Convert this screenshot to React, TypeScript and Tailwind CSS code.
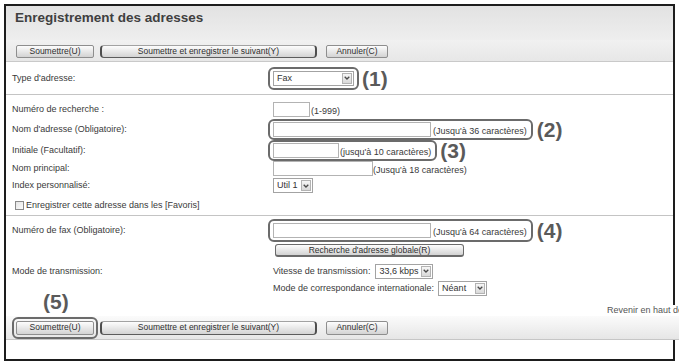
import type { ReactNode } from "react";

function Btn({ cls, strong, children }: { cls: string; strong?: boolean; children: ReactNode }) {
  return (
    <button
      type="button"
      className={`flex shrink-0 items-center justify-center bg-linear-to-b from-[#fdfdfd] to-[#d3d3d3] text-[8.5px] leading-none text-[#2e2e2e] ${
        strong
          ? "rounded-[4px] border-x-2 border-y border-x-[#4e4e4e] border-t-[#a2a2a2] border-b-[#5c5c5c]"
          : "rounded-[2px] border border-[#8e8e8e]"
      } ${cls}`}
    >
      {children}
    </button>
  );
}

function Input({ w }: { w: string }) {
  return <div className={`h-[15px] shrink-0 border border-[#b3b3b3] bg-white ${w}`} />;
}

function Sel({ w, value }: { w: string; value: string }) {
  return (
    <div
      className={`flex h-[15px] shrink-0 items-center justify-between border border-[#a3a3a3] bg-white pr-[1px] pl-[3px] ${w}`}
    >
      <span className="text-[9px] leading-none text-[#333]">{value}</span>
      <span className="flex h-[11px] w-[10px] items-center justify-center border border-[#b3b3b3] bg-linear-to-b from-[#f6f6f6] to-[#d9d9d9]">
        <svg width="6" height="4" viewBox="0 0 6 4">
          <path d="M0.7 0.7 L3 3 L5.3 0.7" fill="none" stroke="#4a4a4a" strokeWidth="1.3" />
        </svg>
      </span>
    </div>
  );
}

function Callout({ cls, children }: { cls: string; children: ReactNode }) {
  return (
    <div className={`flex shrink-0 items-end rounded-[6px] border-2 border-[#6b6b6b] ${cls}`}>
      {children}
    </div>
  );
}

function Num({ cls, children }: { cls?: string; children: ReactNode }) {
  return (
    <span className={`text-[21px] font-bold leading-none text-[#5a5a5a] ${cls ?? ""}`}>{children}</span>
  );
}

function Row({ h, label, children }: { h: string; label?: string; children: ReactNode }) {
  return (
    <div className={`flex shrink-0 items-center ${h}`}>
      <div className="w-[262px] shrink-0 pl-[6px] leading-[11px]">{label}</div>
      <div className="flex items-center">{children}</div>
    </div>
  );
}

export default function App() {
  return (
    <div className="h-[364px] w-[679px] overflow-hidden bg-white pt-[4px] pl-[4px] font-['Liberation_Sans',Arial,sans-serif] text-[9px] text-[#3a3a3a]">
      <div className="flex h-[357px] w-[671px] flex-col border-2 border-[#1d1d1d]">
        {/* titre */}
        <div className="h-[34px] shrink-0 bg-linear-to-b from-[#e2e2e2] to-[#eeeeee] pt-[4px] pl-[9px] text-[13.5px] leading-[16px] font-bold text-[#3f3f3f]">
          Enregistrement des adresses
        </div>
        <div className="flex h-[22px] shrink-0 items-start border-b border-[#c9c9c9] bg-linear-to-b from-[#f1f1f1] to-[#e7e7e7] pt-[5px] pl-[10px]">
          <Btn cls="h-[13px] w-[78px]">Soumettre(U)</Btn>
          <Btn cls="ml-[6px] h-[13px] w-[217px]" strong>
            Soumettre et enregistrer le suivant(Y)
          </Btn>
          <Btn cls="ml-[9px] h-[13px] w-[62px]">Annuler(C)</Btn>
        </div>

        {/* type */}
        <div className="flex h-[33px] shrink-0 items-center border-b border-[#c4c4c4]">
          <div className="w-[262px] shrink-0 pl-[6px] leading-[11px]">Type d'adresse:</div>
          <Callout cls="px-[3px] py-[2px]">
            <Sel w="w-[81px]" value="Fax" />
          </Callout>
          <Num cls="ml-[3px]">(1)</Num>
        </div>

        {/* adresse */}
        <div className="flex h-[121px] shrink-0 flex-col border-b border-[#c4c4c4] pt-[4px]">
          <Row h="h-[20px]" label="Numéro de recherche :">
            <div className="flex items-end pl-[5px]">
              <Input w="w-[37px]" />
              <span className="ml-[1px] leading-[11px]">(1-999)</span>
            </div>
          </Row>
          <Row h="h-[21px]" label="Nom d'adresse (Obligatoire):">
            <Callout cls="px-[3px] py-[1px]">
              <Input w="w-[158px]" />
              <span className="mr-[1px] ml-[2px] leading-[11px]">(Jusqu'à 36 caractères)</span>
            </Callout>
            <Num cls="ml-[4px]">(2)</Num>
          </Row>
          <Row h="h-[21px]" label="Initiale (Facultatif):">
            <Callout cls="px-[3px] py-[1px]">
              <Input w="w-[66px]" />
              <span className="mr-[1px] ml-[1px] leading-[11px]">(jusqu'à 10 caractères)</span>
            </Callout>
            <Num cls="ml-[3px]">(3)</Num>
          </Row>
          <Row h="h-[15px]" label="Nom principal:">
            <div className="flex items-end pl-[5px]">
              <Input w="w-[100px]" />
              <span className="leading-[11px]">(Jusqu'à 18 caractères)</span>
            </div>
          </Row>
          <Row h="h-[19px]" label="Index personnalisé:">
            <div className="pl-[5px]">
              <Sel w="w-[40px]" value="Util 1" />
            </div>
          </Row>
          <div className="flex h-[20px] shrink-0 items-center pl-[9px]">
            <span className="h-[9px] w-[9px] border border-[#8a8a8a] bg-linear-to-br from-[#e4e4e4] to-[#fbfbfb]" />
            <span className="ml-[2px] leading-[11px]">Enregistrer cette adresse dans les [Favoris]</span>
          </div>
        </div>

        {/* fax */}
        <div className="flex h-[100px] shrink-0 flex-col">
          <div className="mt-[3px] flex h-[23px] shrink-0 items-center">
            <div className="w-[262px] shrink-0 pl-[6px] leading-[11px]">Numéro de fax (Obligatoire):</div>
            <Callout cls="px-[3px] py-[2px]">
              <Input w="w-[158px]" />
              <span className="mr-[1px] ml-[2px] leading-[11px]">(Jusqu'à 64 caractères)</span>
            </Callout>
            <Num cls="ml-[4px]">(4)</Num>
          </div>
          <div className="mt-[2px] flex h-[13px] shrink-0 pl-[269px]">
            <Btn cls="h-[13px] w-[189px] !rounded-[3px] !border-[#6a6a6a] !border-b-2">
              Recherche d'adresse globale(R)
            </Btn>
          </div>
          <Row h="mt-[5px] h-[18px]" label="Mode de transmission:">
            <div className="flex items-center gap-[5px] pl-[5px]">
              <span className="leading-[11px]">Vitesse de transmission:</span>
              <Sel w="w-[58px]" value="33,6 kbps" />
            </div>
          </Row>
          <Row h="h-[16px]">
            <div className="flex items-center gap-[4px] pl-[5px]">
              <span className="leading-[11px]">Mode de correspondance internationale:</span>
              <Sel w="w-[49px]" value="Néant" />
            </div>
          </Row>
          <div className="flex h-[20px] shrink-0 items-start">
            <div className="w-[601px] shrink-0 pl-[37px]">
              <Num cls="-mt-[5px] block">(5)</Num>
            </div>
            <span className="mt-[9px] shrink-0 bg-white leading-[11px] whitespace-nowrap text-[#555]">
              Revenir en haut de la page
            </span>
          </div>
        </div>

        {/* boutons bas */}
        <div className="flex h-[24px] w-[673px] shrink-0 items-center border-b border-[#c6c6c6] bg-linear-to-b from-[#fbfbfb] to-[#e6e6e6] pl-[6px]">
          <Callout cls="p-[2px]">
            <Btn cls="h-[14px] w-[78px]">Soumettre(U)</Btn>
          </Callout>
          <Btn cls="ml-[2px] h-[14px] w-[217px]" strong>
            Soumettre et enregistrer le suivant(Y)
          </Btn>
          <Btn cls="ml-[9px] h-[14px] w-[62px]">Annuler(C)</Btn>
        </div>
        <div className="flex-1 bg-white" />
      </div>
    </div>
  );
}
